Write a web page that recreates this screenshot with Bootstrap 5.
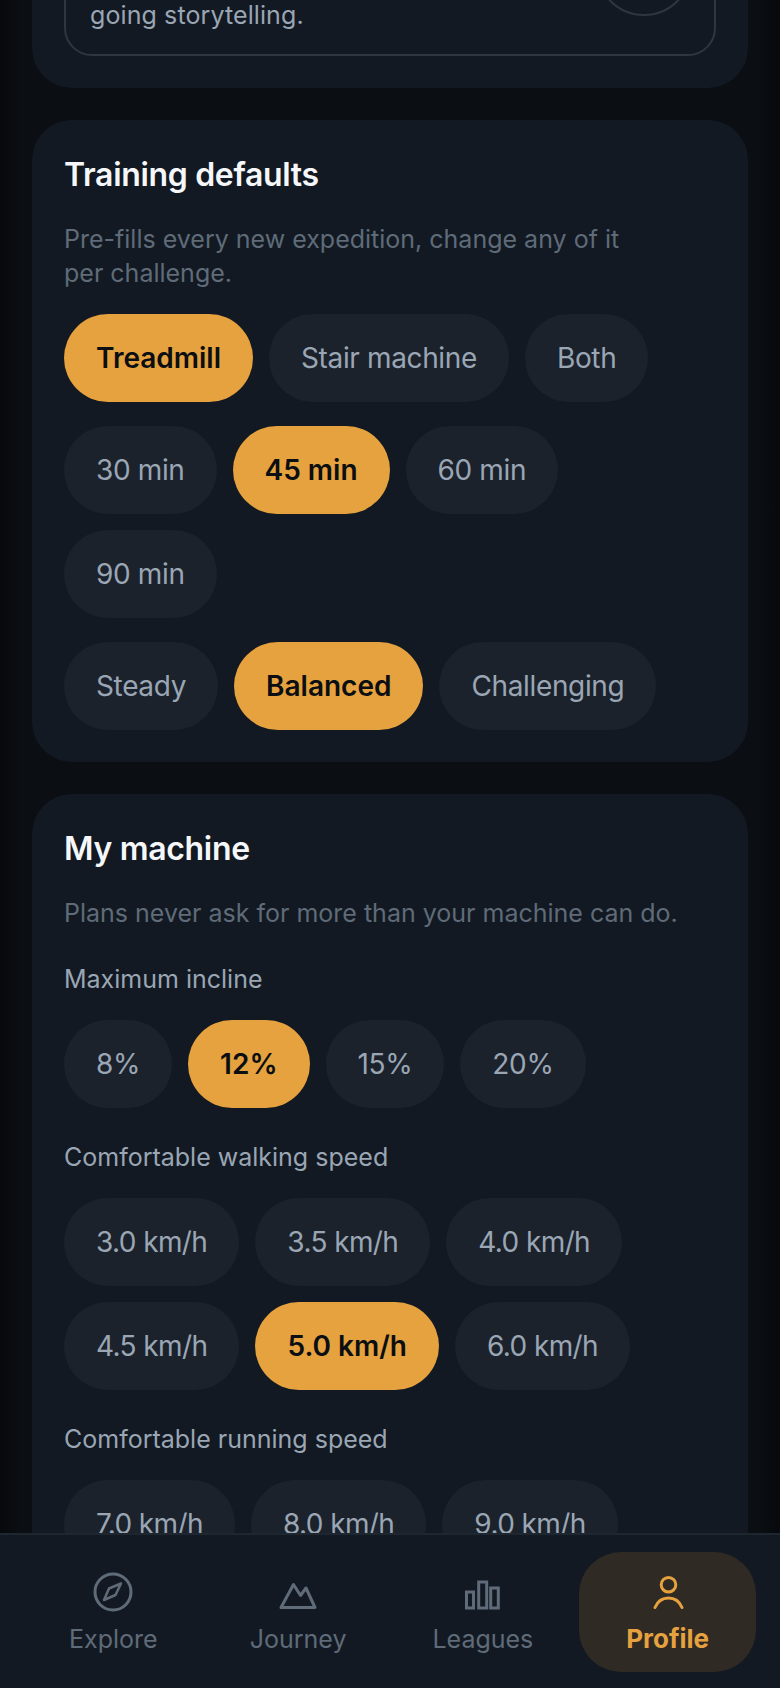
<!DOCTYPE html>
<html lang="en">
<head>
    <meta charset="UTF-8">
    <title>Profile</title>
    <link href="https://cdn.jsdelivr.net/npm/bootstrap@5.3.0/dist/css/bootstrap.min.css" rel="stylesheet">
    <style>
        html, body { height: 100%; }
        body { background: linear-gradient(90deg, #07090c 0, #0b0e12 20px, #0b0e12 760px, #07090c 780px); font-family: Inter, "Liberation Sans", sans-serif; overflow: hidden; }
        .app-shell { height: 1688px; }
        .scroll-area { overflow: hidden; padding: 0 32px; }
        .panel { background: #121922; border-radius: 40px; padding: 32px; margin-bottom: 32px; }
        .panel-top { margin-top: -104px; padding-top: 0; }
        .story-box { border: 2px solid #2f363e; border-radius: 28px; padding: 22px 22px 22px 24px; color: #9aa6b4; font-size: 25px; line-height: 34px; letter-spacing: .1px; }
        .story-toggle { width: 96px; height: 96px; border: 2px solid #2f363e; border-radius: 50%; flex: none; margin-bottom: 16px; }
        .panel-title { color: #f5f7fa; font-size: 32px; font-weight: 600; letter-spacing: -.32px; line-height: 46px; margin: 0 0 24px; }
        .panel-note { color: #5f6b78; font-size: 25px; line-height: 34px; margin: 0 0 24px; }
        .field-label { color: #9aa6b4; font-size: 25px; line-height: 34px; margin: 32px 0 24px; }
        .chip-group { gap: 16px; margin-bottom: 24px; }
        .chip-group:last-child { margin-bottom: 0; }
        .chip { height: 88px; padding: 0 32px; border-radius: 44px; background: #1b222c; color: #9aa6b4; font-size: 28px; letter-spacing: -.36px; border: 0; }
        .chip-speed { letter-spacing: -.6px; }
        .chip.on { background: #e5a23e; color: #0b0e12; font-weight: 600; letter-spacing: 0; }
        .tab-bar { height: 155px; background: #121922; border-top: 2px solid #1e2630; padding: 17px 24px 0 25px; gap: 8px; }
        .tab-item { flex: 1 1 0; height: 120px; padding-top: 16px; border-radius: 42px; color: #5f6b78; font-size: 25px; line-height: 32px; gap: 7px; }
        .tab-item svg { width: 48px; height: 48px; fill: none; stroke: currentColor; stroke-width: 3; stroke-linejoin: round; stroke-linecap: round; }
        .tab-item.on { background: #302a25; color: #e5a23e; font-size: 26px; font-weight: 700; }
    </style>
</head>
<body>
    <div class="app-shell d-flex flex-column">
        <div class="scroll-area flex-grow-1">
            <div class="panel panel-top">
                <div class="story-box d-flex justify-content-between align-items-end">
                    <span>going storytelling.</span>
                    <span class="story-toggle"></span>
                </div>
            </div>

            <div class="panel">
                <h2 class="panel-title">Training defaults</h2>
                <p class="panel-note">Pre-fills every new expedition, change any of it<br>per challenge.</p>
                <div class="chip-group d-flex flex-wrap">
                    <button class="chip on">Treadmill</button>
                    <button class="chip">Stair machine</button>
                    <button class="chip">Both</button>
                </div>
                <div class="chip-group d-flex flex-wrap">
                    <button class="chip">30 min</button>
                    <button class="chip on">45 min</button>
                    <button class="chip">60 min</button>
                    <button class="chip">90 min</button>
                </div>
                <div class="chip-group d-flex flex-wrap">
                    <button class="chip">Steady</button>
                    <button class="chip on">Balanced</button>
                    <button class="chip">Challenging</button>
                </div>
            </div>

            <div class="panel">
                <h2 class="panel-title">My machine</h2>
                <p class="panel-note">Plans never ask for more than your machine can do.</p>
                <p class="field-label">Maximum incline</p>
                <div class="chip-group d-flex flex-wrap">
                    <button class="chip">8%</button>
                    <button class="chip on">12%</button>
                    <button class="chip">15%</button>
                    <button class="chip">20%</button>
                </div>
                <p class="field-label">Comfortable walking speed</p>
                <div class="chip-group d-flex flex-wrap">
                    <button class="chip chip-speed">3.0 km/h</button>
                    <button class="chip chip-speed">3.5 km/h</button>
                    <button class="chip chip-speed">4.0 km/h</button>
                    <button class="chip chip-speed">4.5 km/h</button>
                    <button class="chip chip-speed on">5.0 km/h</button>
                    <button class="chip chip-speed">6.0 km/h</button>
                </div>
                <p class="field-label">Comfortable running speed</p>
                <div class="chip-group d-flex flex-wrap">
                    <button class="chip chip-speed">7.0 km/h</button>
                    <button class="chip chip-speed">8.0 km/h</button>
                    <button class="chip chip-speed">9.0 km/h</button>
                </div>
            </div>
        </div>

        <nav class="tab-bar d-flex flex-shrink-0">
            <a class="tab-item d-flex flex-column align-items-center text-decoration-none">
                <svg viewBox="0 0 48 48"><circle cx="24" cy="24" r="18"/><path d="M32 15.500l-12 5L15 32l11.500-5z" stroke-width="2.500"/></svg>
                Explore
            </a>
            <a class="tab-item d-flex flex-column align-items-center text-decoration-none">
                <svg viewBox="0 0 48 48"><path d="M7 39.500L19.500 16.500l7 11L32 20l9 19.500z"/></svg>
                Journey
            </a>
            <a class="tab-item d-flex flex-column align-items-center text-decoration-none">
                <svg viewBox="0 0 48 48"><path stroke-linejoin="miter" d="M7.500 24h7v16h-7zM19.700 14h8v26h-8zM31.700 20h7.600v20h-7.600z"/></svg>
                Leagues
            </a>
            <a class="tab-item on d-flex flex-column align-items-center text-decoration-none">
                <svg viewBox="0 0 48 48"><circle cx="24.500" cy="16.700" r="7.300"/><path d="M11 39.500c2.500-6 7.500-9.500 13.500-9.500s11 3.500 13.500 9.500"/></svg>
                Profile
            </a>
        </nav>
    </div>
    <script src="https://cdn.jsdelivr.net/npm/bootstrap@5.3.0/dist/js/bootstrap.bundle.min.js"></script>
</body>
</html>
